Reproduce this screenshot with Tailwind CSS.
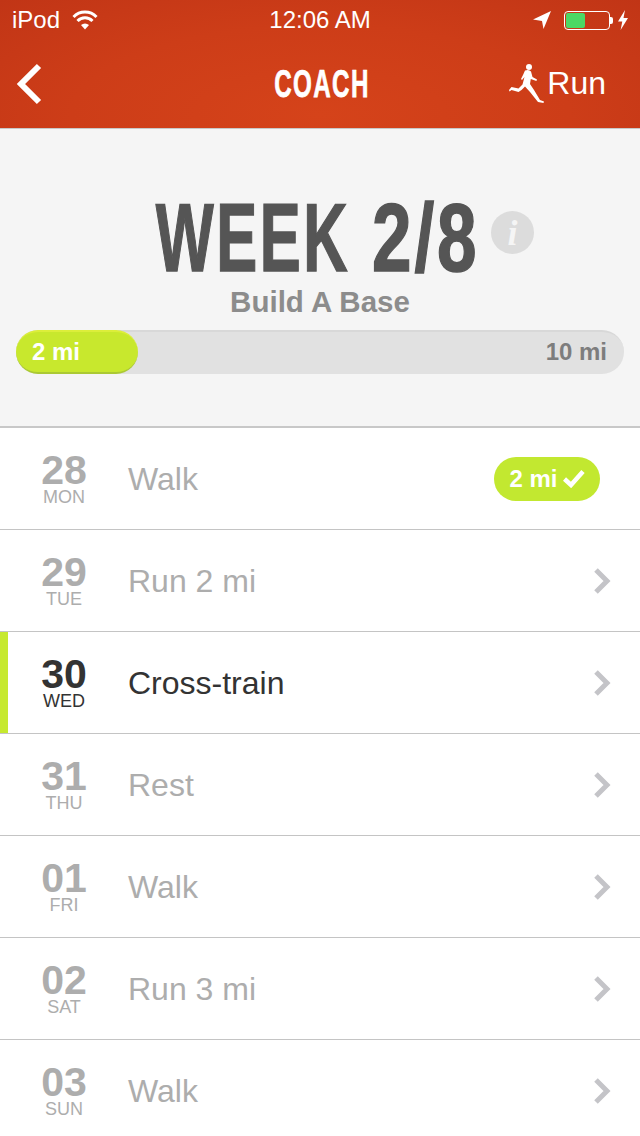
<!DOCTYPE html>
<html>
<head>
<meta charset="utf-8">
<script src="https://cdn.jsdelivr.net/npm/@tailwindcss/browser@4"></script>
</head>
<body class="m-0 bg-white">
<div class="w-[640px] h-[1136px] overflow-hidden bg-white font-['Liberation_Sans',Arial,sans-serif]">
  <!-- header -->
  <header class="h-[128px] bg-[radial-gradient(ellipse_at_50%_90%,#d5431a_0%,#cd3d18_55%,#c13516_100%)] text-white">
    <div class="h-10 flex items-center justify-between px-3 relative">
      <div class="flex items-center gap-[12px]">
        <span class="text-[24px] leading-10">iPod</span>
        <svg width="26" height="20" viewBox="0 0 26 20" fill="none" stroke="white" stroke-width="3"><path d="M1.5 7 A16 16 0 0 1 24.5 7"/><path d="M5.5 11 A10.5 10.5 0 0 1 20.5 11"/><path d="M13 19.5 L9 15 A6 6 0 0 1 17 15 Z" fill="white" stroke="none"/></svg>
      </div>
      <span class="text-[24px] leading-10 ml-[9px]">12:06 AM</span>
      <div class="flex items-center">
        <svg width="18" height="20" viewBox="0 0 18 20" class="mr-[13px]"><path d="M0 9.5 L18 1 L10.5 19 L9 11 Z" fill="white"/></svg>
        <div class="w-[46px] h-[19px] rounded-[4px] border border-white p-[1px]"><div class="w-[19px] h-full bg-[#4cd964] rounded-[2px]"></div></div>
        <div class="w-[3px] h-[7px] bg-white rounded-r-[2px] mr-[5px]"></div>
        <svg width="10" height="20" viewBox="0 0 10 20"><path d="M7 0 L0 11.5 L4.3 11.5 L2.6 20 L10 8 L5.5 8 Z" fill="white"/></svg>
      </div>
    </div>
    <div class="h-[88px] flex items-center justify-between">
      <svg width="28" height="42" viewBox="0 0 28 42" fill="none" stroke="white" stroke-width="6" class="ml-[15px] mb-[1px]"><path d="M24 3 L6 21 L24 39"/></svg>
      <div class="w-[95px] flex justify-center ml-[91px] mb-[1px]"><span class="text-[39px] leading-none font-bold whitespace-nowrap tracking-[2.2px] scale-x-[.62] [-webkit-text-stroke:0.75px_white]">COACH</span></div>
      <div class="flex items-center mr-[34px] mb-[2px]">
        <svg width="36" height="42" viewBox="0 0 36 42" fill="white" class="mr-[2px]"><circle cx="20" cy="5" r="3"/><path d="M16 8.5 Q20 7 22 9.5 L23.5 15 L28 17.5 L27.4 19 L21.8 17 L21 22 L25 28 L31 38 L35 39.5 L34.5 41 L29 40 L21 30 L16 24.5 Q13 28 9.5 30 L2.5 28 L0.5 29.5 L0 28 L2.5 25 L9.5 26.5 L13.5 22.5 L15.5 15 L13 18 L12 17 L14 13 Z"/></svg>
        <span class="text-[32px] leading-none">Run</span>
      </div>
    </div>
  </header>

  <!-- week summary -->
  <section class="h-[300px] bg-[#f5f5f5] border-t border-[#c8c8c8] border-b-2 border-b-[#c8c8c8] pt-[67px] px-4">
    <div class="flex items-start ml-[141px]">
      <div class="w-[322px] flex justify-between h-[84px] items-center text-[96px] leading-none font-bold text-[#555555] whitespace-nowrap [-webkit-text-stroke:1.5px_#555555]">
        <div class="w-[192px] flex justify-center"><span class="tracking-[4px] scale-x-[.64]">WEEK</span></div>
        <div class="w-[106px] flex justify-center"><span class="tracking-[4px] scale-x-[.74]">2/8</span></div>
      </div>
      <div class="w-[43px] h-[43px] rounded-full bg-[#dcdcdc] ml-[12px] mt-[15px] flex items-center justify-center"><span class="font-['Liberation_Serif',serif] italic font-bold text-[36px] leading-none text-[#f5f5f5]">i</span></div>
    </div>
    <div class="text-center text-[29.5px] leading-[34px] font-bold text-[#8c8c8c] mt-[5px]">Build A Base</div>
    <div class="mt-[11px] h-[44px] rounded-full bg-[#e1e1e1] border-t-2 border-[#d8d8d8] flex items-center justify-between">
      <div class="w-[122px] h-[44px] mt-[-2px] rounded-full bg-[#c8e82d] border-t-2 border-t-[#dcee3a] border-b-2 border-b-[#abc934] pl-4 flex items-center text-white font-bold text-[24px]">2 mi</div>
      <span class="text-[#7d7d7d] font-bold text-[24px] pr-[17px] mt-[-2px]">10 mi</span>
    </div>
  </section>

  <!-- list -->
  <ul>
    <li class="h-[102px] border-b border-[#c4c4c4] flex items-center text-[#adadad]">
      <div class="w-[128px] text-center"><div class="text-[41px] leading-[36px] font-bold">28</div><div class="text-[18px] leading-[18px]">MON</div></div>
      <span class="text-[32px]">Walk</span>
      <div class="ml-auto mr-10 h-[44px] w-[106px] rounded-full bg-[#c2e830] text-white font-bold text-[24px] flex items-center justify-center gap-[5px]">2 mi
        <svg width="22" height="18" viewBox="0 0 22 18" fill="none" stroke="white" stroke-width="4.5"><path d="M1.5 9 L8 15 L20 1.5"/></svg>
      </div>
    </li>
    <li class="h-[102px] border-b border-[#c4c4c4] flex items-center text-[#adadad]">
      <div class="w-[128px] text-center"><div class="text-[41px] leading-[36px] font-bold">29</div><div class="text-[18px] leading-[18px]">TUE</div></div>
      <span class="text-[32px]">Run 2 mi</span>
      <svg width="18" height="28" viewBox="0 0 18 28" fill="none" stroke="#c4c4c8" stroke-width="5" class="ml-auto mr-[29px]"><path d="M3 3 L14 14 L3 25"/></svg>
    </li>
    <li class="h-[102px] border-b border-[#c4c4c4] flex items-center text-[#333333]">
      <div class="w-2 h-full bg-[#c6e92f] shrink-0"></div>
      <div class="w-[120px] text-center pr-2"><div class="text-[41px] leading-[36px] font-bold">30</div><div class="text-[18px] leading-[18px]">WED</div></div>
      <span class="text-[32px]">Cross-train</span>
      <svg width="18" height="28" viewBox="0 0 18 28" fill="none" stroke="#c4c4c8" stroke-width="5" class="ml-auto mr-[29px]"><path d="M3 3 L14 14 L3 25"/></svg>
    </li>
    <li class="h-[102px] border-b border-[#c4c4c4] flex items-center text-[#adadad]">
      <div class="w-[128px] text-center"><div class="text-[41px] leading-[36px] font-bold">31</div><div class="text-[18px] leading-[18px]">THU</div></div>
      <span class="text-[32px]">Rest</span>
      <svg width="18" height="28" viewBox="0 0 18 28" fill="none" stroke="#c4c4c8" stroke-width="5" class="ml-auto mr-[29px]"><path d="M3 3 L14 14 L3 25"/></svg>
    </li>
    <li class="h-[102px] border-b border-[#c4c4c4] flex items-center text-[#adadad]">
      <div class="w-[128px] text-center"><div class="text-[41px] leading-[36px] font-bold">01</div><div class="text-[18px] leading-[18px]">FRI</div></div>
      <span class="text-[32px]">Walk</span>
      <svg width="18" height="28" viewBox="0 0 18 28" fill="none" stroke="#c4c4c8" stroke-width="5" class="ml-auto mr-[29px]"><path d="M3 3 L14 14 L3 25"/></svg>
    </li>
    <li class="h-[102px] border-b border-[#c4c4c4] flex items-center text-[#adadad]">
      <div class="w-[128px] text-center"><div class="text-[41px] leading-[36px] font-bold">02</div><div class="text-[18px] leading-[18px]">SAT</div></div>
      <span class="text-[32px]">Run 3 mi</span>
      <svg width="18" height="28" viewBox="0 0 18 28" fill="none" stroke="#c4c4c8" stroke-width="5" class="ml-auto mr-[29px]"><path d="M3 3 L14 14 L3 25"/></svg>
    </li>
    <li class="h-[102px] border-b border-[#c4c4c4] flex items-center text-[#adadad]">
      <div class="w-[128px] text-center"><div class="text-[41px] leading-[36px] font-bold">03</div><div class="text-[18px] leading-[18px]">SUN</div></div>
      <span class="text-[32px]">Walk</span>
      <svg width="18" height="28" viewBox="0 0 18 28" fill="none" stroke="#c4c4c8" stroke-width="5" class="ml-auto mr-[29px]"><path d="M3 3 L14 14 L3 25"/></svg>
    </li>
  </ul>
</div>
</body>
</html>
